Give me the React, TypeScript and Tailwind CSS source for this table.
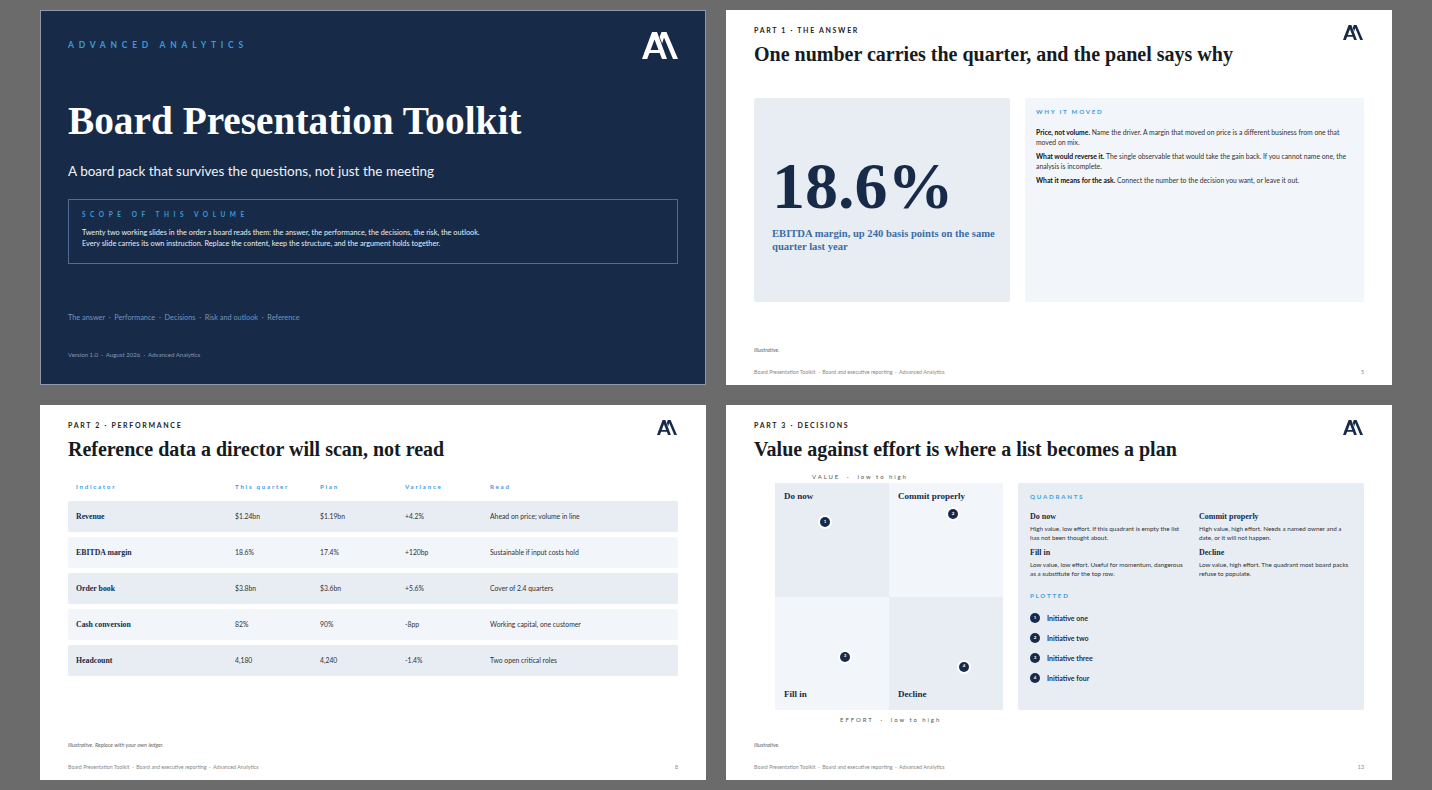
import { ReactNode } from 'react';

const serif = "font-['Liberation_Serif',serif]";
const sans = "font-['Lato',sans-serif]";

// Double "A" monogram
const Logo = ({ className, color }: { className?: string; color: string }) => (
  <svg viewBox="0 0 36 27" className={className} fill={color}>
    <polygon points="0,27 10,0 15,0 25,27 20,27 12.5,7.5 5.2,27" />
    <polygon points="17.6,5 19.5,0 24.5,0 36,27 31,27 22,5.5 20.2,11.5" />
    <polygon points="3.6,18 20.5,18 21.6,21 2.4,21" />
  </svg>
);

const Kicker = ({ children }: { children: ReactNode }) => (
  <div className={`${sans} text-[7px] leading-[10px] font-bold tracking-[0.24em] text-[#222]`}>{children}</div>
);

const SlideHeader = ({ kicker, title }: { kicker: string; title: string }) => (
  <div className="flex items-start justify-between pt-[15px]">
    <div>
      <Kicker>{kicker}</Kicker>
      <h2 className={`${serif} mt-[7px] text-[20px] leading-[24px] font-bold text-[#161b22]`}>{title}</h2>
    </div>
    <Logo className="w-[20px] h-[15px] mr-[1px]" color="#172b48" />
  </div>
);

const SlideFooter = ({ note, page }: { note: string; page: number }) => (
  <div className="mt-auto pb-[9px]">
    <div className={`${sans} italic text-[5.6px] leading-[8px] text-[#666]`}>{note}</div>
    <div className={`${sans} mt-[14px] flex justify-between text-[5.3px] leading-[8px] text-[#888]`}>
      <span>Board Presentation Toolkit &nbsp;·&nbsp; Board and executive reporting &nbsp;·&nbsp; Advanced Analytics</span>
      <span>{page}</span>
    </div>
  </div>
);

const Cover = () => (
  <div className="w-[666px] h-[375px] bg-[#172b48] border border-[#8e9aab] px-[27px] flex flex-col">
    <div className="flex items-start justify-between pt-[21px]">
      <div className={`${sans} mt-[7px] text-[8.5px] leading-[12px] font-bold tracking-[0.56em] text-[#3a9ad9]`}>ADVANCED ANALYTICS</div>
      <Logo className="w-[36px] h-[27px]" color="#ffffff" />
    </div>
    <h1 className={`${serif} mt-[40px] text-[39.3px] leading-[44px] font-bold text-white`}>Board Presentation Toolkit</h1>
    <p className={`${sans} mt-[18px] text-[13.5px] leading-[20px] text-[#eef2f7]`}>
      A board pack that survives the questions, not just the meeting
    </p>
    <div className="mt-[18px] h-[65px] border border-[#4d6d96] px-[13px] pt-[10px]">
      <div className={`${sans} text-[6.5px] leading-[10px] font-bold tracking-[0.7em] text-[#3a9ad9]`}>SCOPE OF THIS VOLUME</div>
      <p className={`${sans} mt-[7px] text-[7.3px] leading-[11px] text-[#e8edf3]`}>
        Twenty two working slides in the order a board reads them: the answer, the performance, the decisions, the risk, the outlook.
        <br />
        Every slide carries its own instruction. Replace the content, keep the structure, and the argument holds together.
      </p>
    </div>
    <div className={`${sans} mt-[48px] text-[7.3px] leading-[12px] text-[#7394bd]`}>
      The answer &nbsp;·&nbsp; Performance &nbsp;·&nbsp; Decisions &nbsp;·&nbsp; Risk and outlook &nbsp;·&nbsp; Reference
    </div>
    <div className={`${sans} mt-[26px] text-[6.1px] leading-[10px] text-[#8396b3]`}>
      Version 1.0 &nbsp;·&nbsp; August 2026 &nbsp;·&nbsp; Advanced Analytics
    </div>
  </div>
);

const AnswerSlide = () => (
  <div className="w-[666px] h-[375px] bg-white px-[28px] flex flex-col">
    <SlideHeader kicker="PART 1 · THE ANSWER" title="One number carries the quarter, and the panel says why" />
    <div className="mt-[32px] flex gap-[15px] h-[204px]">
      <div className="w-[256px] bg-[#e8edf4] rounded-[2px] pl-[18px] pr-[8px] pt-[58px]">
        <div className={`${serif} text-[66px] leading-[60px] font-bold text-[#172b48]`}>18.6%</div>
        <p className={`${serif} mt-[11px] text-[10.6px] leading-[13px] font-bold text-[#3b6ea6]`}>
          EBITDA margin, up 240 basis points on the same quarter last year
        </p>
      </div>
      <div className="flex-1 bg-[#f2f5f9] rounded-[2px] pl-[11px] pr-[10px] pt-[10px]">
        <div className={`${sans} text-[6.2px] leading-[8px] font-bold tracking-[0.28em] text-[#3b9ee0]`}>WHY IT MOVED</div>
        <div className={`${sans} mt-[11px] flex flex-col gap-[4px] text-[6.8px] leading-[10px] text-[#333]`}>
          <p>
            <b className="text-[#111]">Price, not volume.</b> Name the driver. A margin that moved on price is a different business from one that moved on mix.
          </p>
          <p>
            <b className="text-[#111]">What would reverse it.</b> The single observable that would take the gain back. If you cannot name one, the analysis is incomplete.
          </p>
          <p>
            <b className="text-[#111]">What it means for the ask.</b> Connect the number to the decision you want, or leave it out.
          </p>
        </div>
      </div>
    </div>
    <SlideFooter note="Illustrative." page={5} />
  </div>
);

const rows = [
  ['Revenue', '$1.24bn', '$1.19bn', '+4.2%', 'Ahead on price; volume in line'],
  ['EBITDA margin', '18.6%', '17.4%', '+120bp', 'Sustainable if input costs hold'],
  ['Order book', '$3.8bn', '$3.6bn', '+5.6%', 'Cover of 2.4 quarters'],
  ['Cash conversion', '82%', '90%', '-8pp', 'Working capital, one customer'],
  ['Headcount', '4,180', '4,240', '-1.4%', 'Two open critical roles'],
];

const cols = 'grid grid-cols-[159px_85px_85px_85px_1fr] pl-[8px]';

const PerformanceSlide = () => (
  <div className="w-[666px] h-[375px] bg-white px-[28px] flex flex-col">
    <SlideHeader kicker="PART 2 · PERFORMANCE" title="Reference data a director will scan, not read" />
    <div className={`${cols} mt-[22px] ${sans} text-[6.2px] leading-[8px] font-bold tracking-[0.28em] text-[#3b9ee0]`}>
      <span>Indicator</span>
      <span>This quarter</span>
      <span>Plan</span>
      <span>Variance</span>
      <span>Read</span>
    </div>
    <div className="mt-[10px] flex flex-col gap-[5px]">
      {rows.map((r, i) => (
        <div
          key={r[0]}
          className={`${cols} h-[31px] items-center rounded-[2px] ${i % 2 === 0 ? 'bg-[#e8edf4]' : 'bg-[#f2f5f9]'}`}
        >
          <span className={`${serif} text-[7.8px] font-bold text-[#172b48]`}>{r[0]}</span>
          {r.slice(1).map((c, j) => (
            <span key={j} className={`${sans} text-[6.8px] text-[#333]`}>{c}</span>
          ))}
        </div>
      ))}
    </div>
    <SlideFooter note="Illustrative. Replace with your own ledger." page={8} />
  </div>
);

const Dot = ({ n, x, y }: { n: number; x: number; y: number }) => (
  <div
    className="absolute w-[14px] h-[14px] -ml-[7px] -mt-[7px] rounded-full bg-white flex items-center justify-center"
    style={{ left: x, top: y }}
  >
    <div className={`${sans} w-[10px] h-[10px] rounded-full bg-[#172b48] text-white text-[4.5px] font-bold flex items-center justify-center`}>{n}</div>
  </div>
);

const Quadrant = ({ label, bottom, shade, children }: { label: string; bottom?: boolean; shade: string; children?: ReactNode }) => (
  <div className={`relative ${shade} px-[9px] flex flex-col ${bottom ? 'justify-end pb-[10px]' : 'pt-[8px]'}`}>
    <span className={`${serif} text-[9px] leading-[11px] font-bold text-[#172b48]`}>{label}</span>
    {children}
  </div>
);

const quadrants = [
  { title: 'Do now', text: 'High value, low effort. If this quadrant is empty the list has not been thought about.' },
  { title: 'Commit properly', text: 'High value, high effort. Needs a named owner and a date, or it will not happen.' },
  { title: 'Fill in', text: 'Low value, low effort. Useful for momentum, dangerous as a substitute for the top row.' },
  { title: 'Decline', text: 'Low value, high effort. The quadrant most board packs refuse to populate.' },
];

const plotted = ['Initiative one', 'Initiative two', 'Initiative three', 'Initiative four'];

const DecisionsSlide = () => (
  <div className="w-[666px] h-[375px] bg-white px-[28px] flex flex-col">
    <SlideHeader kicker="PART 3 · DECISIONS" title="Value against effort is where a list becomes a plan" />
    <div className="mt-[11px] flex gap-[15px]">
      <div className="pl-[21px]">
        <div className={`${sans} pl-[37px] text-[6px] leading-[10px] tracking-[0.32em] text-[#555]`}>
          VALUE &nbsp;·&nbsp; low to high
        </div>
        <div className="mt-[1px] grid grid-cols-2 grid-rows-2 w-[228px] h-[227px]">
          <Quadrant label="Do now" shade="bg-[#e8edf4]">
            <Dot n={1} x={50} y={39} />
          </Quadrant>
          <Quadrant label="Commit properly" shade="bg-[#f2f5f9]">
            <Dot n={2} x={64} y={31} />
          </Quadrant>
          <Quadrant label="Fill in" bottom shade="bg-[#f2f5f9]">
            <Dot n={3} x={70} y={60} />
          </Quadrant>
          <Quadrant label="Decline" bottom shade="bg-[#e8edf4]">
            <Dot n={4} x={75} y={70} />
          </Quadrant>
        </div>
        <div className={`${sans} mt-[5px] pl-[65px] text-[6px] leading-[10px] tracking-[0.32em] text-[#555]`}>
          EFFORT &nbsp;·&nbsp; low to high
        </div>
      </div>
      <div className="flex-1 mt-[11px] h-[227px] bg-[#e8edf4] rounded-[2px] pl-[12px] pr-[8px] pt-[10px]">
        <div className={`${sans} text-[6.2px] leading-[8px] font-bold tracking-[0.28em] text-[#3b9ee0]`}>QUADRANTS</div>
        <div className="mt-[11px] grid grid-cols-[160px_1fr] gap-x-[9px] gap-y-[6px]">
          {quadrants.map(q => (
            <div key={q.title}>
              <div className={`${serif} text-[8px] leading-[10px] font-bold text-[#172b48]`}>{q.title}</div>
              <p className={`${sans} mt-[2px] text-[6.3px] leading-[9px] text-[#333]`}>{q.text}</p>
            </div>
          ))}
        </div>
        <div className={`${sans} mt-[14px] text-[6.2px] leading-[8px] font-bold tracking-[0.28em] text-[#3b9ee0]`}>PLOTTED</div>
        <div className="mt-[13px] flex flex-col gap-[10px]">
          {plotted.map((p, i) => (
            <div key={p} className="flex items-center gap-[7px]">
              <div className={`${sans} w-[10px] h-[10px] rounded-full bg-[#172b48] text-white text-[4.5px] font-bold flex items-center justify-center`}>{i + 1}</div>
              <span className={`${sans} text-[7px] leading-[10px] font-bold text-[#1f2f47]`}>{p}</span>
            </div>
          ))}
        </div>
      </div>
    </div>
    <SlideFooter note="Illustrative." page={13} />
  </div>
);

export default function App() {
  return (
    <div className="w-[1432px] h-[790px] bg-[#6b6b6b] px-[40px] py-[10px] grid grid-cols-[666px_666px] grid-rows-[375px_375px] gap-[20px]">
      <Cover />
      <AnswerSlide />
      <PerformanceSlide />
      <DecisionsSlide />
    </div>
  );
}
